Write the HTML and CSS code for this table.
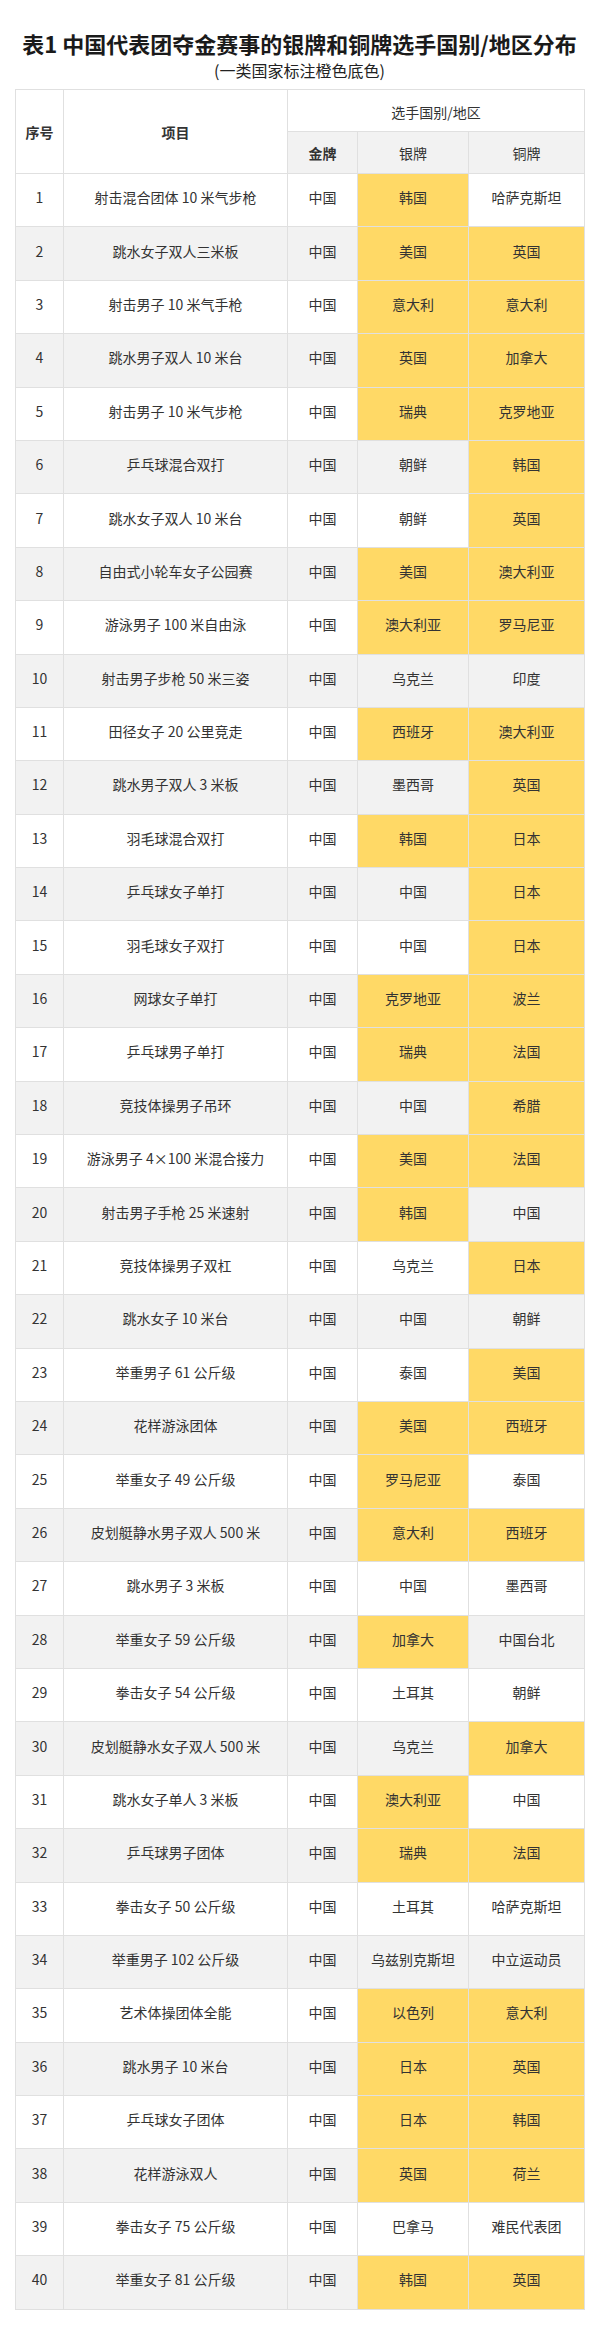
FILE: index.html
```html
<!DOCTYPE html>
<html lang="zh-CN">
<head>
<meta charset="utf-8">
<title>表1 中国代表团夺金赛事的银牌和铜牌选手国别/地区分布</title>
<link rel="stylesheet" href="styles.css">
</head>
<body>
<div class="page">
  <h1 class="title">表1 中国代表团夺金赛事的银牌和铜牌选手国别/地区分布</h1>
  <p class="subtitle">(一类国家标注橙色底色)</p>
  <table class="medals">
    <colgroup>
      <col class="c-no"><col class="c-event"><col class="c-gold"><col class="c-silver"><col class="c-bronze">
    </colgroup>
    <thead>
      <tr class="h1row">
        <th rowspan="2" class="bold">序号</th>
        <th rowspan="2" class="bold">项目</th>
        <th colspan="3" class="group">选手国别/地区</th>
      </tr>
      <tr class="h2row">
        <th class="sub bold">金牌</th>
        <th class="sub">银牌</th>
        <th class="sub">铜牌</th>
      </tr>
    </thead>
    <tbody>
      <tr><td>1</td><td>射击混合团体 10 米气步枪</td><td>中国</td><td class="y">韩国</td><td>哈萨克斯坦</td></tr>
      <tr class="alt"><td>2</td><td>跳水女子双人三米板</td><td>中国</td><td class="y">美国</td><td class="y">英国</td></tr>
      <tr><td>3</td><td>射击男子 10 米气手枪</td><td>中国</td><td class="y">意大利</td><td class="y">意大利</td></tr>
      <tr class="alt"><td>4</td><td>跳水男子双人 10 米台</td><td>中国</td><td class="y">英国</td><td class="y">加拿大</td></tr>
      <tr><td>5</td><td>射击男子 10 米气步枪</td><td>中国</td><td class="y">瑞典</td><td class="y">克罗地亚</td></tr>
      <tr class="alt"><td>6</td><td>乒乓球混合双打</td><td>中国</td><td>朝鲜</td><td class="y">韩国</td></tr>
      <tr><td>7</td><td>跳水女子双人 10 米台</td><td>中国</td><td>朝鲜</td><td class="y">英国</td></tr>
      <tr class="alt"><td>8</td><td>自由式小轮车女子公园赛</td><td>中国</td><td class="y">美国</td><td class="y">澳大利亚</td></tr>
      <tr><td>9</td><td>游泳男子 100 米自由泳</td><td>中国</td><td class="y">澳大利亚</td><td class="y">罗马尼亚</td></tr>
      <tr class="alt"><td>10</td><td>射击男子步枪 50 米三姿</td><td>中国</td><td>乌克兰</td><td>印度</td></tr>
      <tr><td>11</td><td>田径女子 20 公里竞走</td><td>中国</td><td class="y">西班牙</td><td class="y">澳大利亚</td></tr>
      <tr class="alt"><td>12</td><td>跳水男子双人 3 米板</td><td>中国</td><td>墨西哥</td><td class="y">英国</td></tr>
      <tr><td>13</td><td>羽毛球混合双打</td><td>中国</td><td class="y">韩国</td><td class="y">日本</td></tr>
      <tr class="alt"><td>14</td><td>乒乓球女子单打</td><td>中国</td><td>中国</td><td class="y">日本</td></tr>
      <tr><td>15</td><td>羽毛球女子双打</td><td>中国</td><td>中国</td><td class="y">日本</td></tr>
      <tr class="alt"><td>16</td><td>网球女子单打</td><td>中国</td><td class="y">克罗地亚</td><td class="y">波兰</td></tr>
      <tr><td>17</td><td>乒乓球男子单打</td><td>中国</td><td class="y">瑞典</td><td class="y">法国</td></tr>
      <tr class="alt"><td>18</td><td>竞技体操男子吊环</td><td>中国</td><td>中国</td><td class="y">希腊</td></tr>
      <tr><td>19</td><td>游泳男子 4×100 米混合接力</td><td>中国</td><td class="y">美国</td><td class="y">法国</td></tr>
      <tr class="alt"><td>20</td><td>射击男子手枪 25 米速射</td><td>中国</td><td class="y">韩国</td><td>中国</td></tr>
      <tr><td>21</td><td>竞技体操男子双杠</td><td>中国</td><td>乌克兰</td><td class="y">日本</td></tr>
      <tr class="alt"><td>22</td><td>跳水女子 10 米台</td><td>中国</td><td>中国</td><td>朝鲜</td></tr>
      <tr><td>23</td><td>举重男子 61 公斤级</td><td>中国</td><td>泰国</td><td class="y">美国</td></tr>
      <tr class="alt"><td>24</td><td>花样游泳团体</td><td>中国</td><td class="y">美国</td><td class="y">西班牙</td></tr>
      <tr><td>25</td><td>举重女子 49 公斤级</td><td>中国</td><td class="y">罗马尼亚</td><td>泰国</td></tr>
      <tr class="alt"><td>26</td><td>皮划艇静水男子双人 500 米</td><td>中国</td><td class="y">意大利</td><td class="y">西班牙</td></tr>
      <tr><td>27</td><td>跳水男子 3 米板</td><td>中国</td><td>中国</td><td>墨西哥</td></tr>
      <tr class="alt"><td>28</td><td>举重女子 59 公斤级</td><td>中国</td><td class="y">加拿大</td><td>中国台北</td></tr>
      <tr><td>29</td><td>拳击女子 54 公斤级</td><td>中国</td><td>土耳其</td><td>朝鲜</td></tr>
      <tr class="alt"><td>30</td><td>皮划艇静水女子双人 500 米</td><td>中国</td><td>乌克兰</td><td class="y">加拿大</td></tr>
      <tr><td>31</td><td>跳水女子单人 3 米板</td><td>中国</td><td class="y">澳大利亚</td><td>中国</td></tr>
      <tr class="alt"><td>32</td><td>乒乓球男子团体</td><td>中国</td><td class="y">瑞典</td><td class="y">法国</td></tr>
      <tr><td>33</td><td>拳击女子 50 公斤级</td><td>中国</td><td>土耳其</td><td>哈萨克斯坦</td></tr>
      <tr class="alt"><td>34</td><td>举重男子 102 公斤级</td><td>中国</td><td>乌兹别克斯坦</td><td>中立运动员</td></tr>
      <tr><td>35</td><td>艺术体操团体全能</td><td>中国</td><td class="y">以色列</td><td class="y">意大利</td></tr>
      <tr class="alt"><td>36</td><td>跳水男子 10 米台</td><td>中国</td><td class="y">日本</td><td class="y">英国</td></tr>
      <tr><td>37</td><td>乒乓球女子团体</td><td>中国</td><td class="y">日本</td><td class="y">韩国</td></tr>
      <tr class="alt"><td>38</td><td>花样游泳双人</td><td>中国</td><td class="y">英国</td><td class="y">荷兰</td></tr>
      <tr><td>39</td><td>拳击女子 75 公斤级</td><td>中国</td><td>巴拿马</td><td>难民代表团</td></tr>
      <tr class="alt"><td>40</td><td>举重女子 81 公斤级</td><td>中国</td><td class="y">韩国</td><td class="y">英国</td></tr>
    </tbody>
  </table>
</div>
</body>
</html>
```

FILE: styles.css
```css
html, body {
  margin: 0;
  padding: 0;
  background: #ffffff;
}

body {
  font-family: "Noto Sans CJK SC", "Noto Sans", "Liberation Sans", sans-serif;
  color: #333333;
}

.page {
  padding: 27px 16px 0 15px;
}

.title {
  margin: 0;
  font-size: 22px;
  line-height: 32px;
  font-weight: 700;
  color: #1a1a1a;
  text-align: center;
}

.subtitle {
  margin: 0;
  font-size: 16px;
  line-height: 22px;
  color: #222222;
  text-align: center;
}

.medals {
  margin-top: 8px;
  width: 569px;
  border-collapse: collapse;
  table-layout: fixed;
  font-size: 14px;
}

.c-no { width: 48px; }
.c-event { width: 224px; }
.c-gold { width: 70px; }
.c-silver { width: 111px; }
.c-bronze { width: 116px; }

.medals th,
.medals td {
  border: 1px solid #e0e0e0;
  text-align: center;
  vertical-align: middle;
  padding: 0;
  color: #333333;
}

.medals th {
  font-weight: 400;
  font-size: 14px;
  background: #ffffff;
}

.medals th.bold {
  font-weight: 700;
}

.h1row { height: 42px; }
.h2row { height: 42px; }

.medals th.group {
  padding-top: 3px;
}

.medals th.sub {
  background: #f2f2f2;
}

.medals tbody tr {
  height: 53.4px;
}

.medals td {
  padding-bottom: 6px;
  background: #ffffff;
}

.medals tr.alt td {
  background: #f2f2f2;
}

.medals td.y,
.medals tr.alt td.y {
  background: #ffd966;
}
```
